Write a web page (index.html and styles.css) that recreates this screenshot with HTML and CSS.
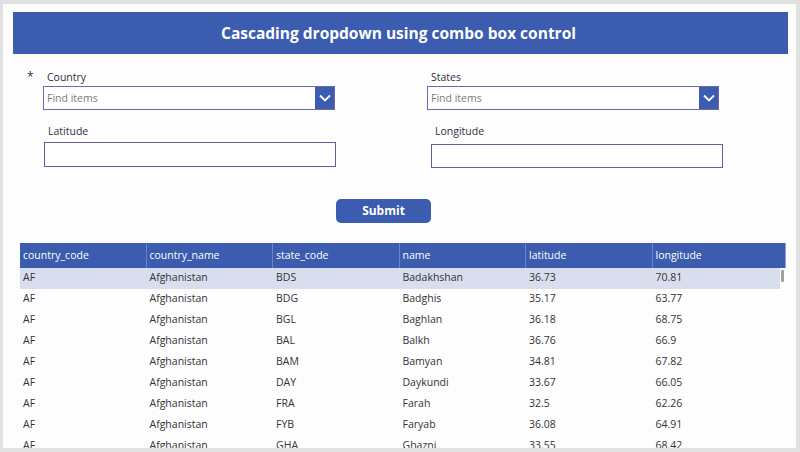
FILE: index.html
```html
<!DOCTYPE html>
<html lang="en">
<head>
    <meta charset="UTF-8">
    <title>Cascading dropdown</title>
    <link rel="stylesheet" href="styles.css">
</head>
<body>
    <div class="screen">
        <header class="title-bar">Cascading dropdown using combo box control</header>

        <div class="form">
            <div class="field-row first">
                <div class="field">
                    <span class="required">*</span>
                    <label class="field-label">Country</label>
                    <div class="combo">
                        <span class="combo-text">Find items</span>
                        <span class="combo-btn">
                            <svg width="12" height="8" viewBox="0 0 12 8"><path d="M1 1.5 L6 6.5 L11 1.5" fill="none" stroke="#fff" stroke-width="1.8"/></svg>
                        </span>
                    </div>
                </div>
                <div class="field">
                    <label class="field-label">States</label>
                    <div class="combo">
                        <span class="combo-text">Find items</span>
                        <span class="combo-btn">
                            <svg width="12" height="8" viewBox="0 0 12 8"><path d="M1 1.5 L6 6.5 L11 1.5" fill="none" stroke="#fff" stroke-width="1.8"/></svg>
                        </span>
                    </div>
                </div>
            </div>

            <div class="field-row second">
                <div class="field field-lat">
                    <label class="field-label">Latitude</label>
                    <div class="text-box"></div>
                </div>
                <div class="field field-lon">
                    <label class="field-label">Longitude</label>
                    <div class="text-box"></div>
                </div>
            </div>

            <div class="actions">
                <button class="submit">Submit</button>
            </div>
        </div>

        <div class="grid">
            <div class="grid-head">
                <div>country_code</div>
                <div>country_name</div>
                <div>state_code</div>
                <div>name</div>
                <div>latitude</div>
                <div>longitude</div>
            </div>
            <div class="grid-body">
                <div class="grid-row selected"><div>AF</div><div>Afghanistan</div><div>BDS</div><div>Badakhshan</div><div>36.73</div><div>70.81</div></div>
                <div class="grid-row"><div>AF</div><div>Afghanistan</div><div>BDG</div><div>Badghis</div><div>35.17</div><div>63.77</div></div>
                <div class="grid-row"><div>AF</div><div>Afghanistan</div><div>BGL</div><div>Baghlan</div><div>36.18</div><div>68.75</div></div>
                <div class="grid-row"><div>AF</div><div>Afghanistan</div><div>BAL</div><div>Balkh</div><div>36.76</div><div>66.9</div></div>
                <div class="grid-row"><div>AF</div><div>Afghanistan</div><div>BAM</div><div>Bamyan</div><div>34.81</div><div>67.82</div></div>
                <div class="grid-row"><div>AF</div><div>Afghanistan</div><div>DAY</div><div>Daykundi</div><div>33.67</div><div>66.05</div></div>
                <div class="grid-row"><div>AF</div><div>Afghanistan</div><div>FRA</div><div>Farah</div><div>32.5</div><div>62.26</div></div>
                <div class="grid-row"><div>AF</div><div>Afghanistan</div><div>FYB</div><div>Faryab</div><div>36.08</div><div>64.91</div></div>
                <div class="grid-row"><div>AF</div><div>Afghanistan</div><div>GHA</div><div>Ghazni</div><div>33.55</div><div>68.42</div></div>
                <span class="scroll-thumb"></span>
            </div>
        </div>
    </div>
</body>
</html>
```

FILE: styles.css
```css
body {
    margin: 0;
    background-color: #e1e1e1;
    font-family: 'Open Sans', 'Noto Sans', sans-serif;
    color: #333;
}
.screen {
    margin: 4px 4px 4px 3px;
    height: 444px;
    padding: 8px 8px 0 10px;
    box-sizing: border-box;
    background-color: #fdfdfe;
    overflow: hidden;
}
.title-bar {
    height: 42px;
    background-color: #3b5caf;
    color: #fff;
    font-size: 15.5px;
    font-weight: 700;
    display: flex;
    align-items: center;
    justify-content: center;
    padding-right: 4px;
}
.form {
    padding-left: 30px;
}
.field-row {
    display: flex;
    gap: 92px;
}
.field-row.first {
    margin-top: 16px;
}
.field-row.second {
    margin-top: 14px;
}
.field {
    position: relative;
    width: 292px;
}
.required {
    position: absolute;
    left: -16px;
    top: -2px;
    font-size: 12px;
}
.field-label {
    display: block;
    height: 14px;
    line-height: 14px;
    font-size: 10.5px;
    padding-left: 4px;
    margin-bottom: 2px;
    color: #2f2f3a;
}
.combo {
    display: flex;
    height: 24px;
    border: 1px solid #6d6aab;
    box-sizing: border-box;
    background-color: #fff;
}
.combo-text {
    flex: 1;
    font-size: 10.5px;
    line-height: 22px;
    padding-left: 3px;
    color: #7a7a7a;
}
.combo-btn {
    width: 19px;
    background-color: #3b5caf;
    display: flex;
    align-items: center;
    justify-content: center;
}
.field-lat {
    margin-left: 1px;
}
.field-lat .field-label {
    margin-bottom: 4px;
}
.field-lon {
    margin-left: 3px;
}
.field-lon .field-label {
    margin-bottom: 6px;
}
.text-box {
    height: 25px;
    border: 1px solid #5f5ca3;
    box-sizing: border-box;
    background-color: #fff;
}
.field-lon .text-box {
    height: 24px;
}
.actions {
    margin-top: 30px;
    padding-left: 293px;
}
.submit {
    width: 95px;
    height: 24px;
    border: none;
    border-radius: 5px;
    background-color: #3b5caf;
    color: #fff;
    font-family: 'Open Sans', 'Noto Sans', sans-serif;
    font-size: 12px;
    font-weight: 700;
    padding: 0;
}
.grid {
    margin: 20px 0 0 7px;
    width: 766px;
}
.grid-head {
    display: grid;
    grid-template-columns: repeat(5, 126.5px) 1fr;
    height: 25px;
    background-color: #3b5caf;
    color: #fff;
    font-size: 10.5px;
}
.grid-head div {
    line-height: 25px;
    padding-left: 3px;
    border-right: 1px solid #6a84c6;
}
.grid-head div:last-child {
    border-right: 1px solid #8ea2d6;
}
.grid-body {
    position: relative;
    padding-right: 6px;
}
.grid-row {
    display: grid;
    grid-template-columns: repeat(5, 126.5px) 1fr;
    height: 21px;
    font-size: 10.5px;
    color: #333;
}
.grid-row div {
    line-height: 19px;
    padding-left: 3px;
}
.grid-row.selected {
    background-color: #d9deee;
}
.scroll-thumb {
    position: absolute;
    right: 2px;
    top: 2px;
    width: 3px;
    height: 12px;
    border-radius: 1px;
    background-color: #a0a0a0;
}
```
